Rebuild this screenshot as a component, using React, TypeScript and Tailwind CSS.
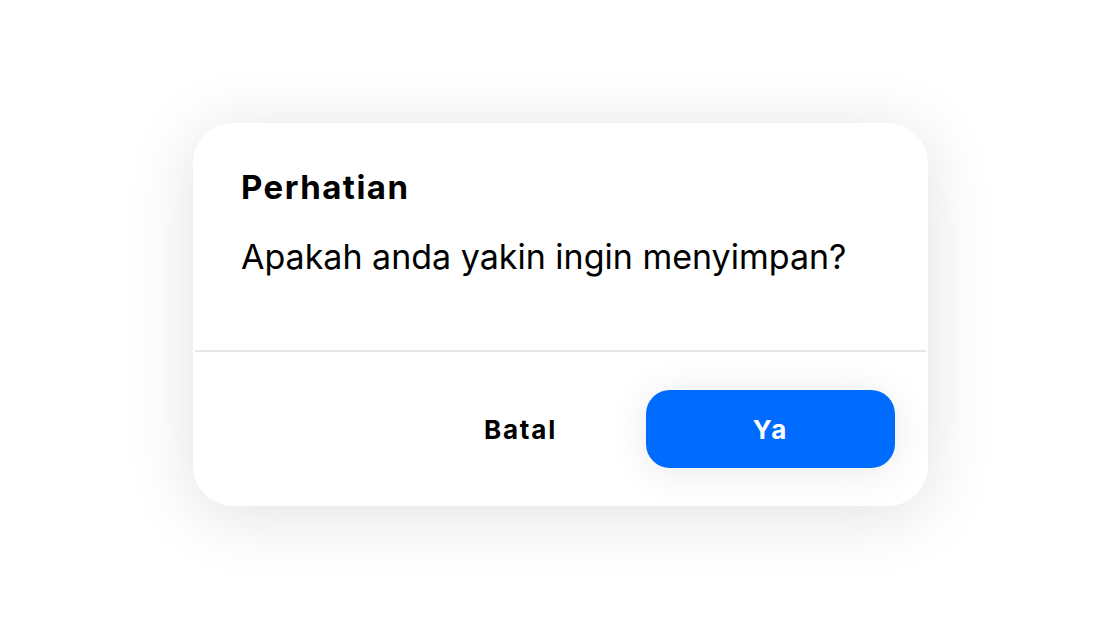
export default function App() {
  return (
    <div className="flex h-[630px] w-[1120px] items-start justify-center bg-white pt-[123px] font-['Inter',sans-serif]">
      <div className="ml-[1px] flex h-[383px] w-[735px] flex-col rounded-[40px] bg-white shadow-[0_8px_70px_rgba(0,0,0,0.12)]">
        <div className="flex h-[227px] flex-col px-[48px] pt-[42px]">
          <h2 className="text-[33px] font-bold leading-[44px] tracking-[0.045em] text-black">Perhatian</h2>
          <p className="mt-[26px] text-[34px] leading-[44px] text-black">Apakah anda yakin ingin menyimpan?</p>
        </div>
        <div className="mx-[2px] h-[2px] bg-[#e6e6e6]" />
        <div className="flex flex-1 items-start justify-end pr-[33px] pt-[38px]">
          <button className="flex h-[78px] w-[249px] items-center justify-center text-[26px] font-bold tracking-[0.07em] text-black">
            Batal
          </button>
          <button className="ml-[1px] flex h-[78px] w-[249px] items-center justify-center rounded-[24px] bg-[#006bff] text-[26px] font-bold tracking-[0.08em] text-white shadow-[0_4px_40px_rgba(0,0,0,0.09)]">
            Ya
          </button>
        </div>
      </div>
    </div>
  )
}
